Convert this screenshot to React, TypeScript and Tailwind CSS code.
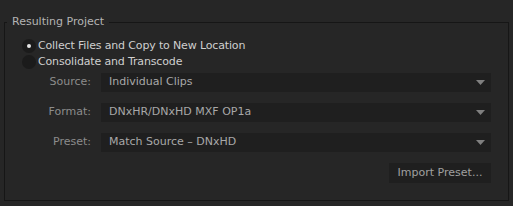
import React from "react";

const font = { fontFamily: '"Lucida Grande", "DejaVu Sans", sans-serif' };

function Radio({ checked, label }: { checked?: boolean; label: string }) {
  return (
    <div className="flex items-center h-[16px]">
      <span className="w-[14px] h-[14px] rounded-full bg-[#1b1b1b] flex items-center justify-center">
        {checked && <span className="w-[4px] h-[4px] rounded-full bg-[#e6e6e6]" />}
      </span>
      <span className="ml-[2px] text-[11px] text-[#cfcfcf] tracking-[-0.15px]">{label}</span>
    </div>
  );
}

function Select({ label, value }: { label: string; value: string }) {
  return (
    <div className="flex items-center h-[19px]">
      <span className="w-[83px] text-right text-[11px] text-[#8c8c8c]">{label}</span>
      <div className="ml-[10px] flex-1 h-[19px] bg-[#1f1f1f] flex items-center pl-[8px] pr-[5px]">
        <span className="flex-1 text-[11px] text-[#a8a8a8]">{value}</span>
        <svg width="9" height="5" viewBox="0 0 9 5" className="mr-[1px]">
          <polygon points="0,0 9,0 4.5,5" fill="#808080" />
        </svg>
      </div>
    </div>
  );
}

export default function App() {
  return (
    <div className="w-[513px] h-[206px] bg-[#262626] pt-[15px] px-[4px]" style={font}>
      <fieldset className="border border-[#161616] h-[186px] pl-[3px] pr-[17px]">
        <legend className="px-[5px] text-[11px] text-[#b4b4b4] leading-[14px] -ml-[1px]">Resulting Project</legend>
        <div className="pl-[14px] pt-[9px] flex flex-col">
          <Radio checked label="Collect Files and Copy to New Location" />
          <Radio label="Consolidate and Transcode" />
        </div>
        <div className="mt-[3px] flex flex-col gap-[11px]">
          <Select label="Source:" value="Individual Clips" />
          <Select label="Format:" value="DNxHR/DNxHD MXF OP1a" />
          <Select label="Preset:" value="Match Source – DNxHD" />
        </div>
        <div className="mt-[11px] flex justify-end">
          <button className="w-[102px] h-[20px] bg-[#1f1f1f] text-[11px] text-[#a0a0a0]">Import Preset...</button>
        </div>
      </fieldset>
    </div>
  );
}
